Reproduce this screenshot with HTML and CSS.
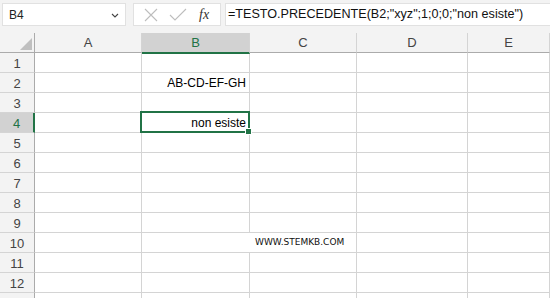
FILE: index.html
```html
<!DOCTYPE html>
<html lang="it">
<head>
<meta charset="utf-8">
<link rel="stylesheet" href="styles.css">
</head>
<body>
<div class="app">
  <div class="fbar">
    <div class="namebox"><span>B4</span>
      <svg class="chev" width="8" height="5" viewBox="0 0 8 5"><path d="M1 1 L4 4 L7 1" fill="none" stroke="#444" stroke-width="1.1"/></svg>
    </div>
    <div class="icons">
      <svg width="16" height="16" viewBox="0 0 16 16"><path d="M2 2 L14 14 M14 2 L2 14" stroke="#bdbdbd" stroke-width="1.1" fill="none"/></svg>
      <svg width="18" height="16" viewBox="0 0 18 16"><path d="M1 8 L6 13 L17 2" stroke="#bdbdbd" stroke-width="1.1" fill="none"/></svg>
      <span class="fx">fx</span>
    </div>
    <div class="formula">=TESTO.PRECEDENTE(B2;"xyz";1;0;0;"non esiste")</div>
  </div>
  <div class="sheet">
    <div class="grid">
      <div class="hd corner"><svg class="tri" width="12" height="12" viewBox="0 0 12 12"><path d="M12 0 L12 12 L0 12 Z" fill="#bfbfbf"/></svg></div>
      <div class="hd col">A</div>
      <div class="hd col sel">B</div>
      <div class="hd col">C</div>
      <div class="hd col">D</div>
      <div class="hd col">E</div>

      <div class="hd row">1</div><div class="c"></div><div class="c"></div><div class="c"></div><div class="c"></div><div class="c"></div>
      <div class="hd row">2</div><div class="c"></div><div class="c r">AB-CD-EF-GH</div><div class="c"></div><div class="c"></div><div class="c"></div>
      <div class="hd row">3</div><div class="c"></div><div class="c"></div><div class="c"></div><div class="c"></div><div class="c"></div>
      <div class="hd row sel">4</div><div class="c"></div><div class="c r">non esiste</div><div class="c"></div><div class="c"></div><div class="c"></div>
      <div class="hd row">5</div><div class="c"></div><div class="c"></div><div class="c"></div><div class="c"></div><div class="c"></div>
      <div class="hd row">6</div><div class="c"></div><div class="c"></div><div class="c"></div><div class="c"></div><div class="c"></div>
      <div class="hd row">7</div><div class="c"></div><div class="c"></div><div class="c"></div><div class="c"></div><div class="c"></div>
      <div class="hd row">8</div><div class="c"></div><div class="c"></div><div class="c"></div><div class="c"></div><div class="c"></div>
      <div class="hd row">9</div><div class="c"></div><div class="c"></div><div class="c"></div><div class="c"></div><div class="c"></div>
      <div class="hd row">10</div><div class="c"></div><div class="c"></div><div class="c"></div><div class="c"></div><div class="c"></div>
      <div class="hd row">11</div><div class="c"></div><div class="c"></div><div class="c"></div><div class="c"></div><div class="c"></div>
      <div class="hd row">12</div><div class="c"></div><div class="c"></div><div class="c"></div><div class="c"></div><div class="c"></div>
      <div class="hd row"></div><div class="c"></div><div class="c"></div><div class="c"></div><div class="c"></div><div class="c"></div>
    </div>
    <div class="selection"><div class="handle"></div></div>
    <div class="watermark">WWW.STEMKB.COM</div>
  </div>
</div>
</body>
</html>
```

FILE: styles.css
```css
html, body {
  margin: 0;
  padding: 0;
  background: #fff;
  overflow: hidden;
}
.app {
  width: 550px;
  height: 298px;
  overflow: hidden;
  font-family: "Liberation Sans", Arial, sans-serif;
}
.fbar {
  height: 33px;
  background: #f3f3f3;
  display: flex;
  align-items: flex-start;
  padding: 3px 0 0 2px;
  box-sizing: border-box;
}
.namebox {
  width: 124px;
  height: 23px;
  box-sizing: border-box;
  background: #fff;
  border: 1px solid #e1e1e1;
  display: flex;
  align-items: center;
  justify-content: space-between;
  padding: 0 6px 0 6px;
  font-size: 12px;
  color: #222;
}
.chev { margin-top: 1px; }
.icons {
  margin-left: 7px;
  width: 88px;
  height: 23px;
  box-sizing: border-box;
  background: #fff;
  border: 1px solid #e1e1e1;
  display: flex;
  align-items: center;
  padding-left: 9px;
  gap: 10px;
}
.fx {
  font-family: "Liberation Serif", "Times New Roman", serif;
  font-style: italic;
  font-size: 14px;
  color: #333;
  margin-left: 2px;
}
.formula {
  margin-left: 4px;
  flex: 1;
  height: 23px;
  box-sizing: border-box;
  background: #fff;
  border: 1px solid #e1e1e1;
  border-right: none;
  padding: 0 0 0 2px;
  font-size: 12.6px;
  line-height: 20px;
  color: #111;
  white-space: nowrap;
}
.sheet {
  position: relative;
}
.grid {
  display: grid;
  grid-template-columns: 35px 107px 108px 107px 111px 82px;
  grid-auto-rows: 20px;
}
.grid > div {
  box-sizing: border-box;
  border-right: 1px solid #d4d4d4;
  border-bottom: 1px solid #d4d4d4;
}
.hd {
  background: #f3f3f3;
  color: #444;
  font-size: 13px;
  display: flex;
  align-items: center;
  justify-content: center;
}
.hd.col {
  border-bottom-color: #ababab !important;
}
.hd.corner {
  position: relative;
  border-bottom-color: #ababab !important;
  border-right-color: #ababab !important;
}
.tri {
  position: absolute;
  right: 2px;
  bottom: 2px;
}
.hd.row {
  border-right-color: #ababab !important;
  padding-top: 1px;
}
.hd.col.sel {
  background: #d2d2d2;
  color: #217346;
  border-bottom: 2px solid #217346 !important;
  margin-bottom: -1px;
  height: 21px;
  position: relative;
  z-index: 1;
}
.hd.row.sel {
  background: #d2d2d2;
  color: #217346;
  border-right: 2px solid #217346 !important;
}
.c {
  font-size: 12px;
  color: #000;
  display: flex;
  align-items: flex-end;
  padding: 0 3px 2px 3px;
  white-space: nowrap;
}
.c.r { justify-content: flex-end; }
.selection {
  position: absolute;
  left: 140px;
  top: 78px;
  width: 110px;
  height: 22px;
  box-sizing: border-box;
  border: 2px solid #217346;
}
.handle {
  position: absolute;
  right: -4px;
  bottom: -4px;
  width: 5px;
  height: 5px;
  background: #217346;
  border: 1px solid #fff;
}
.watermark {
  position: absolute;
  left: 249px;
  top: 200px;
  width: 106px;
  height: 19px;
  background: #fff;
  font-family: "DejaVu Sans", Tahoma, sans-serif;
  font-size: 9px;
  line-height: 19px;
  color: #111;
  padding-left: 6px;
  box-sizing: border-box;
}
```
